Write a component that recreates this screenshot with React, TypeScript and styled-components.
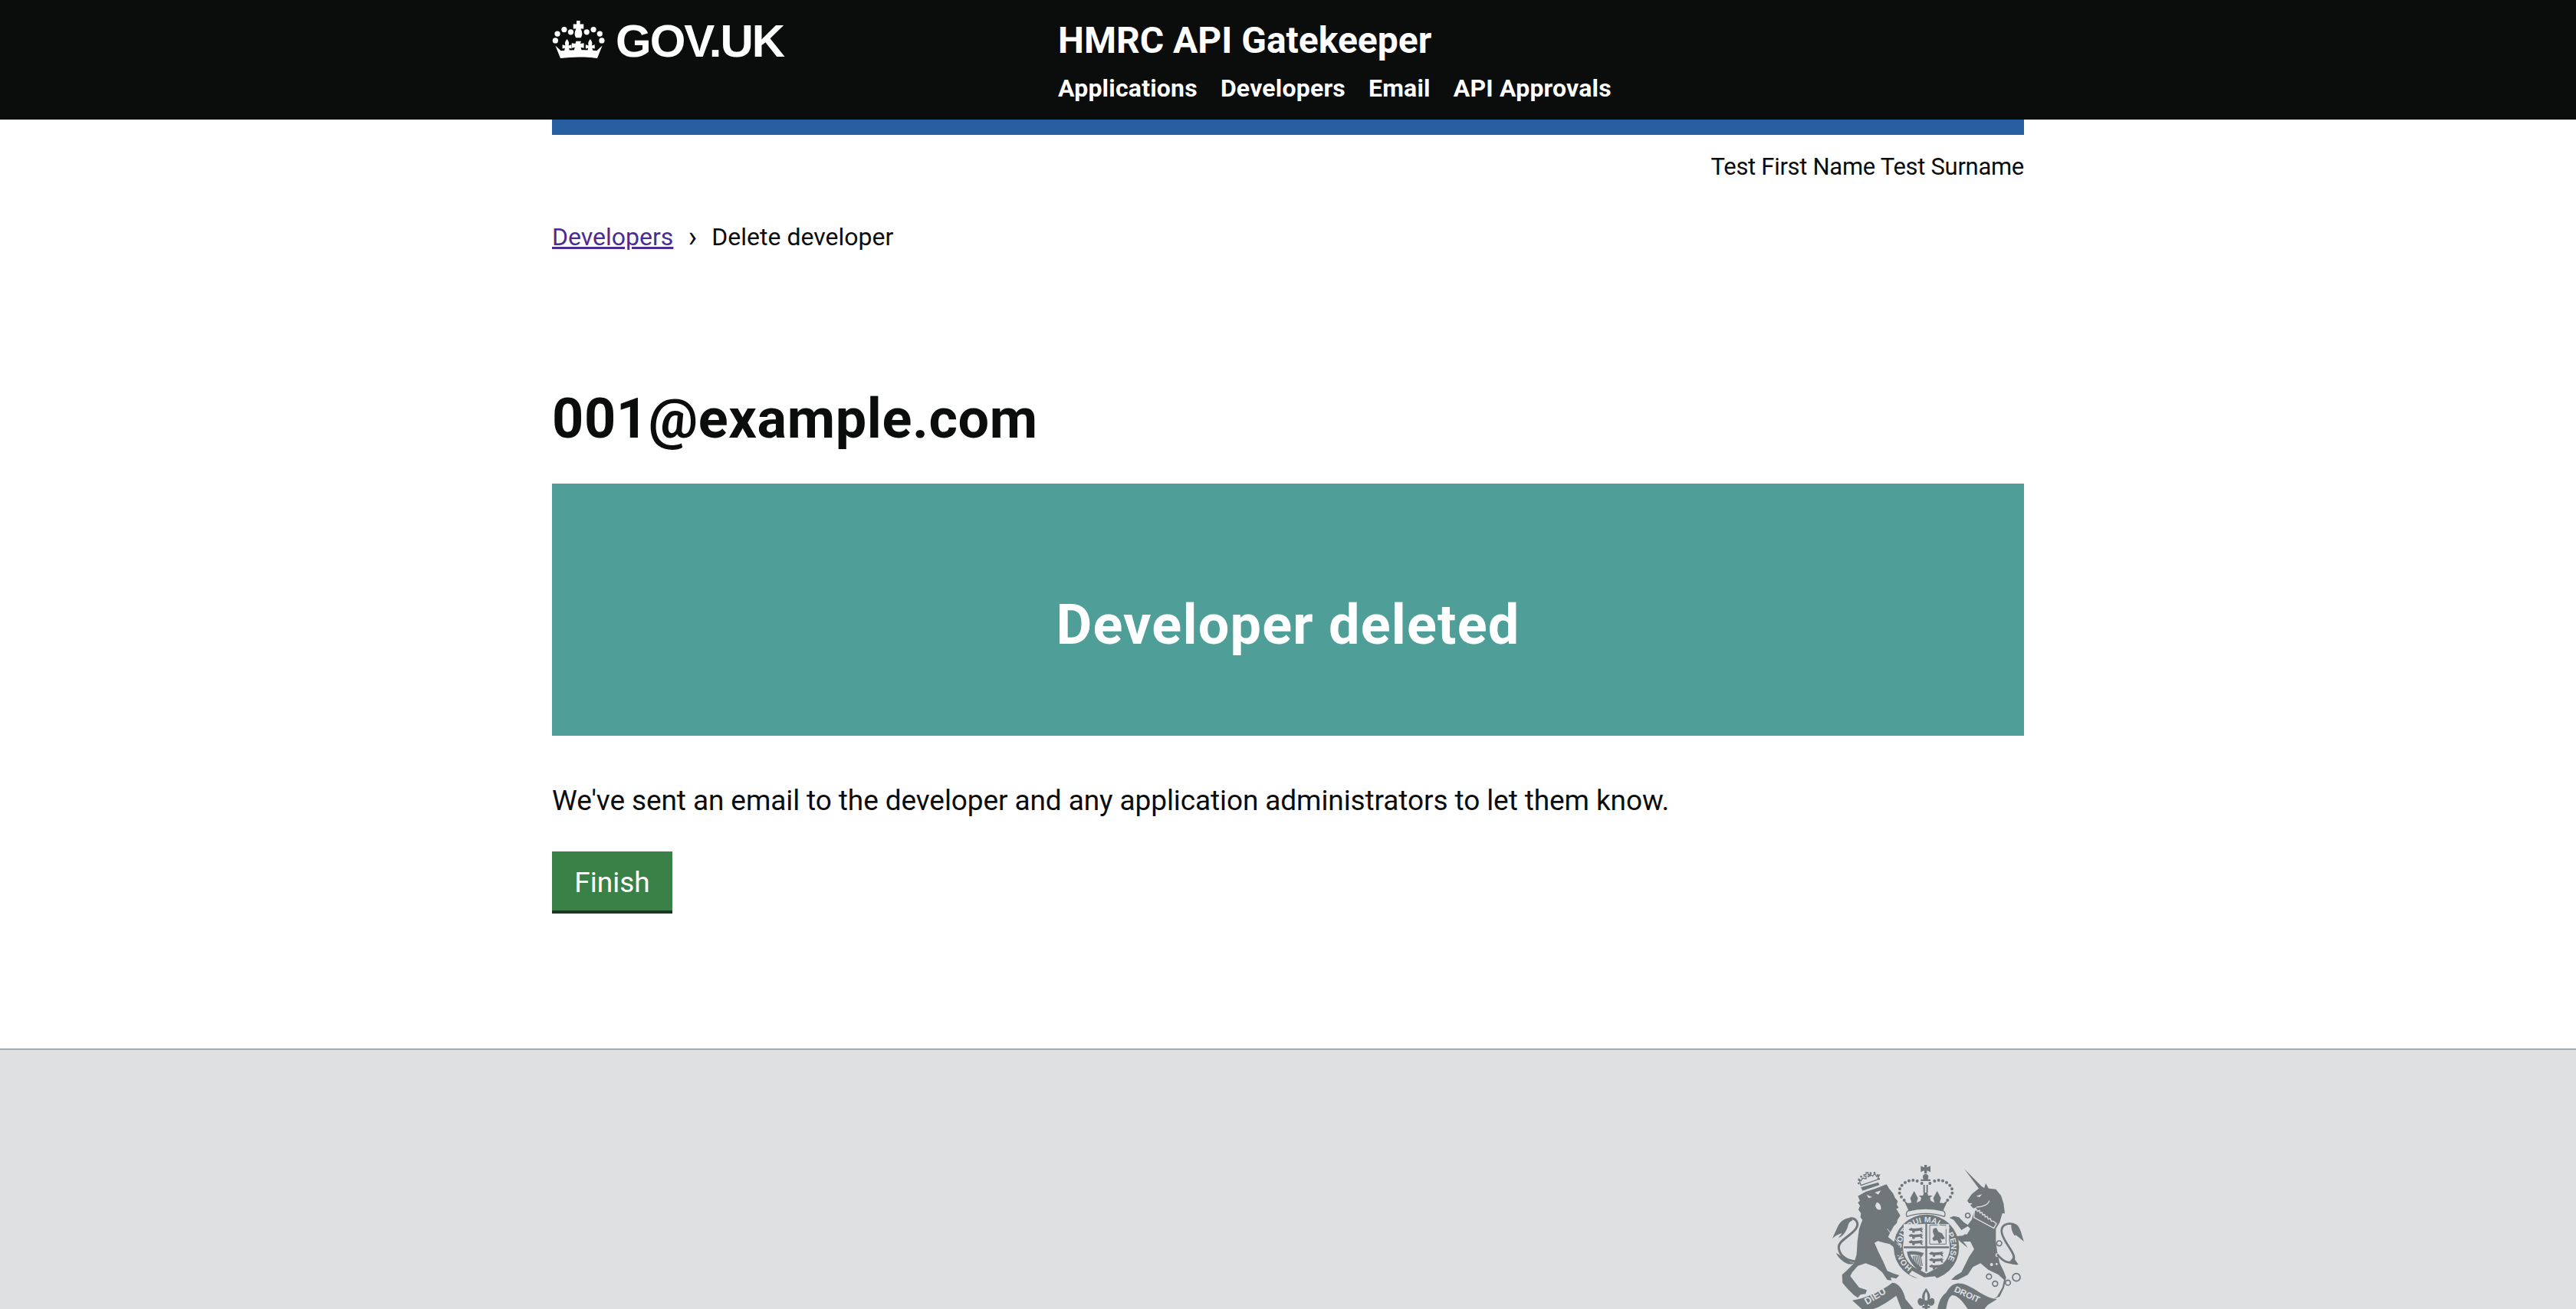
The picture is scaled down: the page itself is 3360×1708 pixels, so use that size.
import React from 'react'
import styled, { createGlobalStyle } from 'styled-components'

const GlobalStyle = createGlobalStyle`
  html, body {
    margin: 0;
    padding: 0;
    height: 100%;
    background: #fff;
  }
  body {
    font-family: Roboto, Arial, sans-serif;
    color: #0b0c0c;
    overflow: hidden;
  }
  #root {
    height: 100%;
  }
`

const Page = styled.div`
  height: 1708px;
  display: flex;
  flex-direction: column;
  overflow: hidden;
`

const Container = styled.div`
  width: 1920px;
  margin: 0 auto;
`

const Header = styled.header`
  background: #0b0c0c;
  height: 156px;
  flex-shrink: 0;
  color: #fff;
`

const HeaderInner = styled(Container)`
  display: flex;
`

const LogoColumn = styled.div`
  width: 660px;
  display: flex;
  align-items: flex-start;
  padding-top: 26px;
  gap: 13px;
`

const LogoText = styled.a`
  font-family: "Liberation Sans", Arial, sans-serif;
  font-weight: 700;
  font-size: 60px;
  line-height: 56px;
  letter-spacing: -2px;
  color: #fff;
`

const ProductColumn = styled.div`
  display: flex;
  flex-direction: column;
  padding-top: 27px;
`

const ProductName = styled.div`
  font-weight: 700;
  font-size: 48px;
  line-height: 52px;
`

const Nav = styled.nav`
  display: flex;
  gap: 30px;
  margin-top: 16px;
`

const NavLink = styled.a`
  font-weight: 700;
  font-size: 32px;
  line-height: 40px;
  letter-spacing: 0.2px;
  color: #fff;
`

const BlueBar = styled(Container)`
  height: 20px;
  background: #265e9f;
`

const UserName = styled(Container)`
  text-align: right;
  font-size: 31px;
  letter-spacing: -0.3px;
  line-height: 40px;
  margin-top: 22px;
`

const Breadcrumbs = styled(Container)`
  display: flex;
  align-items: center;
  margin-top: 51px;
  font-size: 32px;
  line-height: 40px;
`

const BreadcrumbLink = styled.a`
  color: #4c2c92;
  text-decoration: underline;
`

const BreadcrumbSep = styled.span`
  width: 50px;
  text-align: center;
  font-size: 38px;
`

const Main = styled(Container)`
  padding-top: 178px;
`

const Title = styled.h1`
  margin: 0;
  font-size: 72px;
  line-height: 80px;
  font-weight: 700;
  letter-spacing: 0.6px;
`

const Panel = styled.div`
  margin-top: 44px;
  height: 329px;
  background: #4f9f98;
  color: #fff;
  display: flex;
  justify-content: center;
  padding-top: 145px;
  box-sizing: border-box;
`

const PanelTitle = styled.h2`
  margin: 0;
  font-size: 72px;
  line-height: 80px;
  font-weight: 700;
  letter-spacing: 1.2px;
`

const Message = styled.p`
  margin: 60px 0 0;
  font-size: 37px;
  letter-spacing: -0.1px;
  line-height: 50px;
`

const Button = styled.button`
  display: block;
  margin-top: 41px;
  width: 157px;
  height: 81px;
  padding: 0;
  border: none;
  background: #3a8147;
  box-shadow: inset 0 -4px 0 #173a1e;
  color: #fff;
  font-family: inherit;
  font-size: 37px;
  line-height: 50px;
`

const Footer = styled.footer`
  margin-top: 176px;
  flex: 1;
  background: #dee0e2;
  border-top: 2px solid #a1acb2;
`

const FooterInner = styled(Container)`
  display: flex;
  justify-content: flex-end;
  padding-top: 150px;
`

const CrownLogo = () => (
  <svg width="70" height="52" viewBox="30 30 210 158" fill="#fff" aria-hidden="true">
    <path d="M126 33h14v14h14v18h-12c8 12 8 26 1 36h-19c-7-10-7-24 1-36h-12V47h13z" />
    <circle cx="77" cy="68" r="11" />
    <circle cx="103" cy="78" r="11" />
    <circle cx="50" cy="85" r="11" />
    <circle cx="42" cy="112" r="11" />
    <circle cx="193" cy="68" r="11" />
    <circle cx="166" cy="78" r="11" />
    <circle cx="218" cy="85" r="11" />
    <circle cx="226" cy="112" r="11" />
    <path d="M42 132L62 182Q134 172 208 182L228 132L206 152Q134 146 64 152z" />
    <path d="M124 114h20l-3 10 14-2v20l-12-3 5 20h-34l5-20-12 3v-20l14 2z" />
    <path d="M88 106c8 10 10 18 6 26l12-4v16l-10-2 4 16H76l4-16-10 2v-16l12 4c-4-8-2-16 6-26z" />
    <path d="M180 106c8 10 10 18 6 26l12-4v16l-10-2 4 16h-24l4-16-10 2v-16l12 4c-4-8-2-16 6-26z" />
  </svg>
)

const crestGrey = '#6f777b'
const crestBg = '#dee0e2'

const CrestText = styled.text`
  font-family: "Liberation Sans", Arial, sans-serif;
  font-weight: 700;
  fill: ${crestBg};
`

const chainRings = [
  [530, 198, 9], [522, 283, 9], [653, 307, 10], [613, 437, 10], [637, 465, 10], [687, 461, 10], [720, 440, 15],
]

const crownPearls = [
  [350, 72], [332, 63], [316, 60], [300, 62], [285, 69], [272, 80], [264, 94], [263, 110], [270, 125], [281, 138],
  [382, 72], [400, 63], [416, 60], [432, 62], [447, 69], [460, 80], [468, 94], [469, 110], [462, 125], [451, 138],
]

const lionPearls = [
  [103, 72], [104, 58], [113, 46], [150, 32], [165, 31], [178, 40], [182, 55],
]

const passantLions = [
  [298, 244], [298, 268], [298, 293], [378, 338], [378, 363], [378, 388],
]

const harpStrings = [316, 323, 330, 337, 344]

const Passant = ({ x, y }: { x: number; y: number }) => (
  <path
    transform={`translate(${x} ${y}) scale(1.05 .85)`}
    d="M0 10l10-8 8 4 22-2 12-4-4 8 8-2-6 8 4 10-8-2-2-6-20 2-2 8-8-2 0-8-8 0-6-6z"
  />
)

// Royal coat of arms, traced by eye from the footer of the reference
const Crest = () => (
  <svg width="250" height="188" viewBox="0 0 750 564" aria-hidden="true">
    <defs>
      <path id="garterMotto" d="M312 401A97 97 0 1 1 422 402" />
    </defs>
    <g fill={crestGrey}>
      {/* crown, garter and shield */}
      <path d="M360 0h10v10l14-6v24l-14-6v12h-10V22l-14 6V4l14 6z" />
      <circle cx="365" cy="47" r="11" />
      <path d="M346 56h38v7h-38zM356 78h6v30h-6zM368 78h6v30h-6z" />
      <path d="M280 138L300 182Q365 162 432 182L452 138L435 150L420 148L425 130L410 102L395 130L400 148L385 140L382 128L392 120L375 120L372 108L358 108L355 120L338 120L348 128L345 140L330 148L335 130L320 102L305 130L310 148L295 150z" />
      {crownPearls.map(([x, y]) => <circle key={`${x}-${y}`} cx={x} cy={y} r="6" />)}
      <circle cx="368" cy="322" r="128" />
      <path d="M295 180Q365 162 435 180Q446 190 438 202Q365 178 292 202Q285 190 295 180z" fill={crestBg} stroke={crestGrey} strokeWidth="4" />
      <circle cx="368" cy="322" r="92" fill={crestBg} />
      <path d="M279 232H457V322Q457 385 368 425Q279 385 279 322z" fill={crestBg} />
      <path d="M364 230h7v188h-7zM279 319h178v7H279z" />
      {passantLions.map(([x, y]) => <Passant key={`${x}-${y}`} x={x} y={y} />)}
      <path d="M395 250l12-4 8 16 14 6 12 20-10 4-8-4 6 14-12 6-6-14-14 4-6-10 8-10-6-16z" />
      <path d="M381 236h64v74h-64z" fill="none" stroke={crestGrey} strokeWidth="3" />
      <path d="M292 340C310 335 340 338 358 345L350 360C335 352 318 350 305 352C315 375 335 395 352 402L345 415C320 405 295 370 292 340z" />
      {harpStrings.map(x => (
        <path key={x} d={`M${x} 356L${x + 8} 396`} fill="none" stroke={crestGrey} strokeWidth="4" />
      ))}
      <CrestText fontSize="31" letterSpacing="0.4"><textPath href="#garterMotto">HONI SOIT QUI MAL Y PENSE</textPath></CrestText>
      <path d="M300 428L350 452L412 448L402 436L360 440L312 414z" fill={crestBg} />
      <circle cx="340" cy="450" r="7" fill={crestBg} />
      <circle cx="375" cy="462" r="7" fill={crestBg} />
      <path d="M367 482C378 498 386 510 381 526C392 514 403 525 399 541C393 556 381 552 375 545L373 552H382V560H372V564H362V560H352V552H361L359 545C353 552 341 556 335 541C331 525 342 514 353 526C348 510 356 498 367 482z" />
      <path d="M367 496C372 505 374 514 372 530H362C360 514 362 505 367 496z" fill={crestBg} />

      {/* lion */}
      <path d="M132 30v8h-8v6h8v10l-14-2-6 10-8-6 8 24 64-22 8-18-10 6-8-12-8 10-8-6-10 8V44h8v-6h-8v-8z" fill="none" stroke={crestGrey} strokeWidth="4" />
      {lionPearls.map(([x, y]) => <circle key={`${x}-${y}`} cx={x} cy={y} r="4" />)}
      <path d="M112 88L180 68L184 79L118 101z" />
      <path d="M100 122L130 105L170 92L212 76L222 92L228 100L238 112L245 128L256 142L252 155L260 168L250 172L266 198L255 215L252 228L240 240L225 268L218 282L262 318L272 345L268 358L250 350L238 320L225 310L205 305L178 298L165 305L180 340L200 380L215 415L240 425L262 432L250 445L228 440L232 452L215 450L195 420L170 400L130 385L100 395L78 420L70 435L105 480L135 490L130 505L110 508L100 520L85 510L60 485L40 462L38 430L55 415L85 385L95 350L98 300L105 250L118 215L110 205L112 190L102 175L108 160L100 148L108 140z" />
      <path d="M134 116L156 126L142 130z" fill={crestBg} />
      <path d="M166 108L190 100L180 116z" fill={crestBg} />
      <path d="M174 146C186 148 192 162 190 174C180 180 170 170 168 158z" fill={crestBg} />
      <path d="M215 250L270 320" fill="none" stroke={crestBg} strokeWidth="3" />
      <path d="M90 378C55 375 28 355 25 325C24 295 70 280 92 250C108 226 90 205 68 210" fill="none" stroke={crestGrey} strokeWidth="9" />
      <path d="M75 207C50 205 30 222 22 240C15 255 8 270 0 288C15 275 28 270 38 268C32 275 28 280 24 286C45 278 58 255 62 235C65 225 72 218 78 218z" />
      <path d="M70 380C50 368 30 352 15 345C22 362 40 380 62 388C70 390 80 388 88 384z" />

      {/* unicorn */}
      <path d="M516 15L585 85L595 90L600 72L612 92L640 95L660 120L670 150L675 190L665 190L655 225L640 250L640 300L645 340L655 385L670 415L680 440L672 480L655 515L630 525L645 515L665 480L672 450L650 430L610 410L580 385L550 400L530 430L510 440L490 450L465 450L480 435L505 420L520 390L535 360L555 330L540 300L512 300L520 310L530 325L500 300L480 280L525 275L540 250L530 240L505 255L490 235L475 215L458 207L475 200L495 205L515 225L530 235L545 215L553 190L560 178L565 165L552 170L540 158L548 150L535 150L528 140L545 115L573 92z" />
      <path d="M614 140C610 155 590 165 565 165" fill="none" stroke={crestBg} strokeWidth="4" />
      <path d="M563 122L586 114L576 126z" fill={crestBg} />
      <path d="M556 180l8-6 4 8 8-4 2 10 8-2 2 10 8-2 2 10 8-2 4 10 8-2 4 10 8 0 12 10-10 18-78-42z" stroke={crestBg} strokeWidth="4" />
      <circle cx="645" cy="353" r="7" fill={crestBg} />
      <circle cx="623" cy="390" r="6" fill={crestBg} />
      <circle cx="643" cy="388" r="4" fill={crestBg} />
      {chainRings.map(([x, y, r]) => (
        <circle key={`${x}-${y}`} cx={x} cy={y} r={r} fill="none" stroke={crestGrey} strokeWidth="5" />
      ))}
      <path d="M645 350C665 375 695 395 710 370C720 345 665 300 662 260C662 235 685 225 708 232" fill="none" stroke={crestGrey} strokeWidth="8" />
      <path d="M702 228C725 228 732 245 738 262C742 275 746 290 750 300C735 288 725 280 718 274C715 280 712 278 706 265C700 250 698 240 702 228z" />
      <path d="M690 385C705 390 718 392 728 390C720 378 712 368 708 360z" />

      {/* motto ribbons */}
      <path d="M78 530C130 522 190 495 235 461C262 462 280 495 286 525L318 564H270L250 512C225 530 190 555 160 564H115z" />
      <path d="M445 500C465 465 485 460 510 465C560 480 600 525 645 525L608 548L595 564H530C510 535 490 510 470 510C455 515 450 540 445 564H412C415 540 425 515 445 500z" />
      <CrestText fontSize="38" transform="rotate(-31 135 548)" x="135" y="548">DIEU</CrestText>
      <CrestText fontSize="34" transform="rotate(25 478 488)" x="478" y="496">DROIT</CrestText>
    </g>
  </svg>
)

export default function App() {
  return (
    <Page>
      <GlobalStyle />
      <Header>
        <HeaderInner>
          <LogoColumn>
            <CrownLogo />
            <LogoText>GOV.UK</LogoText>
          </LogoColumn>
          <ProductColumn>
            <ProductName>HMRC API Gatekeeper</ProductName>
            <Nav>
              <NavLink>Applications</NavLink>
              <NavLink>Developers</NavLink>
              <NavLink>Email</NavLink>
              <NavLink>API Approvals</NavLink>
            </Nav>
          </ProductColumn>
        </HeaderInner>
      </Header>
      <BlueBar />
      <UserName>Test First Name Test Surname</UserName>
      <Breadcrumbs>
        <BreadcrumbLink>Developers</BreadcrumbLink>
        <BreadcrumbSep>›</BreadcrumbSep>
        <span>Delete developer</span>
      </Breadcrumbs>
      <Main>
        <Title>001@example.com</Title>
        <Panel>
          <PanelTitle>Developer deleted</PanelTitle>
        </Panel>
        <Message>We've sent an email to the developer and any application administrators to let them know.</Message>
        <Button>Finish</Button>
      </Main>
      <Footer>
        <FooterInner>
          <Crest />
        </FooterInner>
      </Footer>
    </Page>
  )
}
